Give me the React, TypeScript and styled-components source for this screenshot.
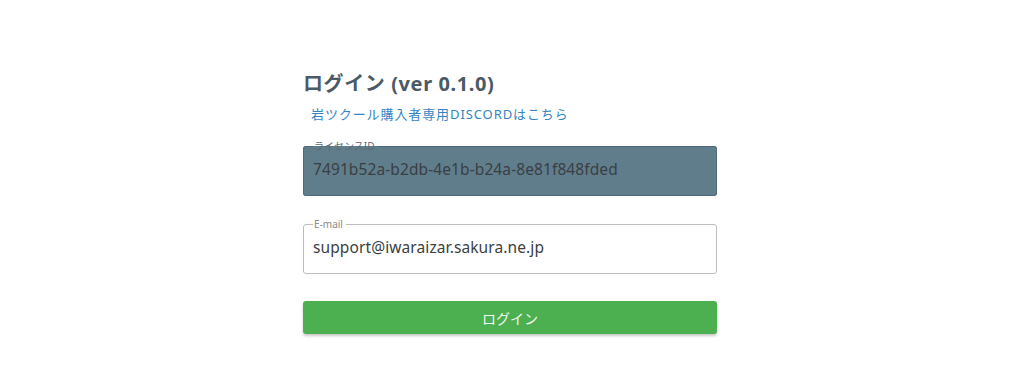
import React from 'react';
import styled, { createGlobalStyle } from 'styled-components';

const GlobalStyle = createGlobalStyle`
  html, body {
    margin: 0;
    padding: 0;
    background: #ffffff;
    font-family: Poppins, "Noto Sans", "Noto Sans CJK JP", sans-serif;
  }
`;

const Page = styled.div`
  display: flex;
  justify-content: center;
  padding: 68px 4px 0 0;
  height: 389px;
  box-sizing: border-box;
`;

const Panel = styled.div`
  width: 414px;
  display: flex;
  flex-direction: column;
`;

const Title = styled.h1`
  margin: 0;
  font-size: 20px;
  font-weight: 700;
  line-height: 32px;
  letter-spacing: 0.6px;
  color: #4b5a66;
  font-family: "Noto Sans", "Noto Sans CJK JP", sans-serif;
`;

const DiscordLink = styled.a`
  display: block;
  margin: 4px 0 0 8px;
  font-size: 13px;
  line-height: 20px;
  color: #3585c4;
  text-decoration: none;
  font-family: "Noto Sans", "Noto Sans CJK JP", sans-serif;
  letter-spacing: 0.9px;
`;

const Field = styled.fieldset<{ $filled?: boolean }>`
  margin: ${p => (p.$filled ? '16px' : '22px')} 0 0;
  padding: 0 9px;
  height: 56px;
  box-sizing: border-box;
  border: 1px solid ${p => (p.$filled ? '#50697a' : '#bdbdbd')};
  border-radius: 3px;
  background: ${p => (p.$filled ? '#607d8b' : '#ffffff')};
  min-width: 0;
`;

const Legend = styled.legend<{ $filled?: boolean }>`
  padding: 0 3px 0 1px;
  margin-left: 0;
  font-size: 10px;
  line-height: 12px;
  color: ${p => (p.$filled ? '#5b6a74' : '#8a8a8a')};
  font-family: "Noto Sans", "Noto Sans CJK JP", sans-serif;
`;

const Value = styled.input`
  display: block;
  width: 100%;
  border: none;
  outline: none;
  background: transparent;
  padding: 0;
  margin-top: 5px;
  height: 24px;
  font-size: 15.5px;
  letter-spacing: 0.1px;
  color: #3a3f44;
  font-family: "Noto Sans", "Noto Sans CJK JP", sans-serif;
`;

const LoginButton = styled.button`
  margin-top: 27px;
  height: 33px;
  width: 100%;
  border: none;
  border-radius: 3px;
  background: #4caf50;
  color: #eef7ee;
  font-size: 14px;
  font-family: "Noto Sans", "Noto Sans CJK JP", sans-serif;
  box-shadow: 0 2px 3px rgba(0, 0, 0, 0.22);
  cursor: pointer;
`;

const App: React.FC = () => {
  return (
    <>
      <GlobalStyle />
      <Page>
        <Panel>
          <Title>ログイン (ver 0.1.0)</Title>
          <DiscordLink href="#">岩ツクール購入者専用DISCORDはこちら</DiscordLink>
          <Field $filled>
            <Legend $filled>ライセンスID</Legend>
            <Value readOnly value="7491b52a-b2db-4e1b-b24a-8e81f848fded" />
          </Field>
          <Field>
            <Legend>E-mail</Legend>
            <Value readOnly value="support@iwaraizar.sakura.ne.jp" />
          </Field>
          <LoginButton>ログイン</LoginButton>
        </Panel>
      </Page>
    </>
  );
};

export default App;
